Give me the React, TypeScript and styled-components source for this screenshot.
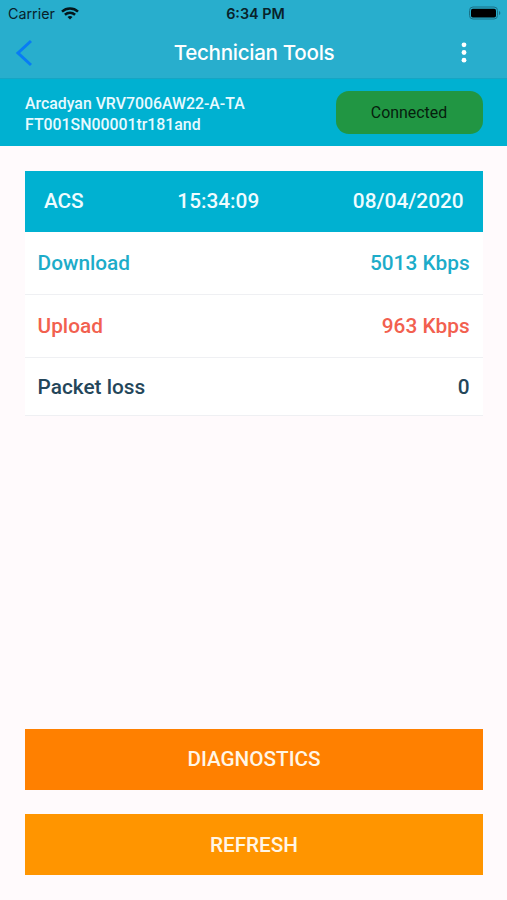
import React from 'react';
import styled, { createGlobalStyle } from 'styled-components';

const GlobalStyle = createGlobalStyle`
  * { box-sizing: border-box; }
  body { margin: 0; background: #fffafc; font-family: Roboto, sans-serif; }
`;

const Screen = styled.div`
  width: 507px;
  height: 900px;
  display: flex;
  flex-direction: column;
  background: #fffafc;
  overflow: hidden;
`;

const StatusBar = styled.div`
  height: 27px;
  padding: 0 6px 0 8px;
  display: grid;
  grid-template-columns: 1fr auto 1fr;
  align-items: center;
  background: #28aecd;
  color: #08222a;
  font: 400 14.3px/27px Inter, sans-serif;
`;

const Carrier = styled.div`
  display: flex;
  align-items: center;
  gap: 6px;
`;

const Clock = styled.div`
  padding-left: 2px;
  font-size: 14.4px;
  font-weight: 600;
`;

const Battery = styled.svg`
  justify-self: end;
  margin-top: -1px;
`;

const NavBar = styled.header`
  height: 52px;
  padding: 0 14px;
  display: grid;
  grid-template-columns: 49px 1fr 49px;
  align-items: center;
  background: #28aecd;
  border-bottom: 1px solid #16a5c4;
`;

const Title = styled.h1`
  margin: 0;
  padding-left: 1px;
  text-align: center;
  color: #fff;
  font: 500 20.6px Inter, sans-serif;
  letter-spacing: -0.3px;
`;

const DeviceBar = styled.section`
  height: 67.4px;
  padding: 0 24.5px 0 25px;
  display: flex;
  align-items: center;
  justify-content: space-between;
  background: #00b1d1;
`;

const DeviceName = styled.div`
  padding-top: 3px;
  color: #e8faff;
  font-size: 15.85px;
  font-weight: 500;
  line-height: 21px;
`;

const StatusPill = styled.div`
  width: 147px;
  height: 43px;
  border-radius: 13px;
  background: #219643;
  color: #06200d;
  font-size: 15.9px;
  line-height: 43px;
  text-align: center;
`;

const Results = styled.section`
  margin: 24.3px 24.4px 0 25.4px;
`;

const ResultsHead = styled.div`
  height: 61.3px;
  padding: 0 19px 0 18.5px;
  display: flex;
  align-items: center;
  justify-content: space-between;
  background: #00b1d1;
  color: #effcff;
  font-size: 20.8px;
  font-weight: 500;
`;

const Row = styled.div<{ $color: string; $height: number }>`
  height: ${(p) => p.$height}px;
  padding: 1px 13px 0 12.2px;
  display: flex;
  align-items: center;
  justify-content: space-between;
  background: #fff;
  border-bottom: 1px solid #eff0f3;
  color: ${(p) => p.$color};
  font-size: 20.8px;
  font-weight: 500;
`;

const Actions = styled.footer`
  margin: auto 24.4px 24.6px 25.4px;
  display: grid;
  gap: 24px;
`;

const ActionButton = styled.button<{ $color: string }>`
  height: 61.4px;
  padding: 0;
  border: 0;
  background: ${(p) => p.$color};
  color: #fff6e6;
  font: 500 20.7px Roboto, sans-serif;
`;

const rows = [
  { label: 'Download', value: '5013 Kbps', color: '#1dacc9', height: 63 },
  { label: 'Upload', value: '963 Kbps', color: '#f2604f', height: 62.6 },
  { label: 'Packet loss', value: '0', color: '#24465a', height: 58 },
];

export default function App() {
  return (
    <Screen>
      <GlobalStyle />
      <StatusBar>
        <Carrier>
          <span>Carrier</span>
          <svg width="18" height="13" viewBox="0 0 18 13" fill="none" stroke="#04161c" strokeWidth="2.5">
            <path d="M1 4.6C5.5.5 12.5.5 17 4.6M3.9 7.8c3-2.6 7.2-2.6 10.2 0" />
            <path d="M9 12.4 6.5 10c1.5-1.3 3.5-1.3 5 0Z" fill="#04161c" stroke="none" />
          </svg>
        </Carrier>
        <Clock>6:34 PM</Clock>
        <Battery width="33" height="14" viewBox="0 0 33 14">
          <rect x="1.5" y="1" width="28" height="12" rx="3.5" fill="none" stroke="#1a7186" />
          <rect x="3" y="2.7" width="25" height="8.8" rx="1.8" fill="#000" />
          <path d="M31 5v4c1.8-.6 1.8-3.4 0-4Z" fill="#1a7186" />
        </Battery>
      </StatusBar>
      <NavBar>
        <svg width="20" height="28" viewBox="0 0 20 28" fill="none" stroke="#087cf5" strokeWidth="3">
          <path d="M17 2 4 14l13 12" />
        </svg>
        <Title>Technician Tools</Title>
        <svg width="30" height="22" viewBox="0 0 30 22" fill="#fff">
          <circle cx="20" cy="2.8" r="2.4" />
          <circle cx="20" cy="10.5" r="2.4" />
          <circle cx="20" cy="18.2" r="2.4" />
        </svg>
      </NavBar>
      <DeviceBar>
        <DeviceName>
          Arcadyan VRV7006AW22-A-TA
          <br />
          FT001SN00001tr181and
        </DeviceName>
        <StatusPill>Connected</StatusPill>
      </DeviceBar>
      <Results>
        <ResultsHead>
          <span>ACS</span>
          <span>15:34:09</span>
          <span>08/04/2020</span>
        </ResultsHead>
        {rows.map((r) => (
          <Row key={r.label} $color={r.color} $height={r.height}>
            <span>{r.label}</span>
            <span>{r.value}</span>
          </Row>
        ))}
      </Results>
      <Actions>
        <ActionButton $color="#ff8000">DIAGNOSTICS</ActionButton>
        <ActionButton $color="#ff9500">REFRESH</ActionButton>
      </Actions>
    </Screen>
  );
}
